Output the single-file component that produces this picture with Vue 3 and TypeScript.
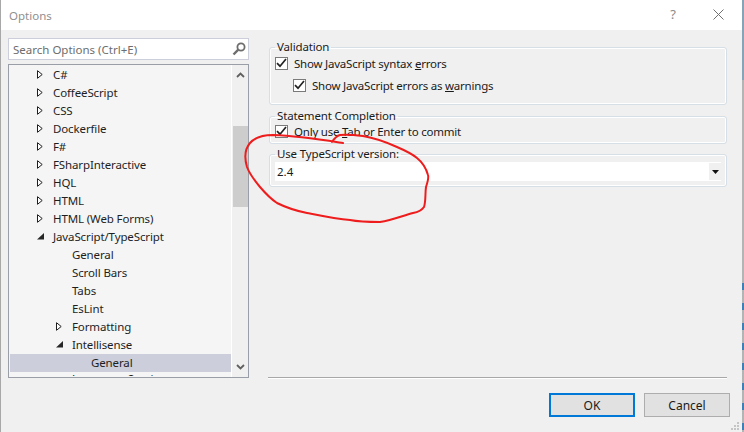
<script setup lang="ts">
interface Row { label: string; depth: number; arrow?: 'open' | 'closed'; selected?: boolean }
const rows: Row[] = [
  { label: 'C#', depth: 0, arrow: 'closed' },
  { label: 'CoffeeScript', depth: 0, arrow: 'closed' },
  { label: 'CSS', depth: 0, arrow: 'closed' },
  { label: 'Dockerfile', depth: 0, arrow: 'closed' },
  { label: 'F#', depth: 0, arrow: 'closed' },
  { label: 'FSharpInteractive', depth: 0, arrow: 'closed' },
  { label: 'HQL', depth: 0, arrow: 'closed' },
  { label: 'HTML', depth: 0, arrow: 'closed' },
  { label: 'HTML (Web Forms)', depth: 0, arrow: 'closed' },
  { label: 'JavaScript/TypeScript', depth: 0, arrow: 'open' },
  { label: 'General', depth: 1 },
  { label: 'Scroll Bars', depth: 1 },
  { label: 'Tabs', depth: 1 },
  { label: 'EsLint', depth: 1 },
  { label: 'Formatting', depth: 1, arrow: 'closed' },
  { label: 'Intellisense', depth: 1, arrow: 'open' },
  { label: 'General', depth: 2, selected: true },
  { label: 'Language Service', depth: 1 },
]
const indent = (d: number) => ({ paddingLeft: `${27 + d * 19}px` })
</script>

<template>
  <div class="window">
    <header class="titlebar">
      <span class="title">Options</span>
      <span class="help">?</span>
      <svg class="close" width="11" height="11" viewBox="0 0 11 11"><path d="M.5.5l10 10M10.5.5l-10 10" stroke="#707070" fill="none" /></svg>
    </header>
    <div class="body">
      <div class="main">
        <aside class="side">
          <div class="search">
            <span class="search-text">Search Options (Ctrl+E)</span>
            <svg width="14" height="14" viewBox="0 0 14 14"><circle cx="9" cy="5" r="3.6" fill="none" stroke="#6e6e6e" stroke-width="1.8" /><path d="M6.3 7.7L1.5 12.5" stroke="#6e6e6e" stroke-width="2.4" /></svg>
          </div>
          <div class="tree">
            <div class="rows">
              <div v-for="(r, i) in rows" :key="i" class="row" :class="{ selected: r.selected }" :style="indent(r.depth)">
                <span class="arrow">
                  <svg v-if="r.arrow === 'closed'" width="6" height="9" viewBox="0 0 6 9"><path d="M.5.7L5.2 4.5.5 8.3z" fill="#fff" stroke="#1e1e1e" /></svg>
                  <svg v-else-if="r.arrow === 'open'" width="7" height="7" viewBox="0 0 7 7"><path d="M7 0v6.5H0z" fill="#262626" /></svg>
                </span>
                <span class="label">{{ r.label }}</span>
              </div>
            </div>
            <div class="scrollbar">
              <svg class="chev" width="9" height="6" viewBox="0 0 9 6"><path d="M1 5l3.5-3.5L8 5" fill="none" stroke="#606060" stroke-width="1.8" /></svg>
              <div class="thumb"></div>
              <svg class="chev down" width="9" height="6" viewBox="0 0 9 6"><path d="M1 1l3.5 3.5L8 1" fill="none" stroke="#606060" stroke-width="1.8" /></svg>
            </div>
          </div>
        </aside>
        <section class="panel">
          <div class="groups">
            <fieldset class="group g1">
              <legend>Validation</legend>
              <label class="check first"><span class="box"><svg width="11" height="10" viewBox="0 0 11 10"><path d="M1 5.2l3 3L10 1" fill="none" stroke="#222" stroke-width="1.7" /></svg></span><span>Show JavaScript syntax <u>e</u>rrors</span></label>
              <label class="check sub"><span class="box"><svg width="11" height="10" viewBox="0 0 11 10"><path d="M1 5.2l3 3L10 1" fill="none" stroke="#222" stroke-width="1.7" /></svg></span><span>Show JavaScript errors as <u>w</u>arnings</span></label>
            </fieldset>
            <fieldset class="group g2">
              <legend>Statement Completion</legend>
              <label class="check second"><span class="box"><svg width="11" height="10" viewBox="0 0 11 10"><path d="M1 5.2l3 3L10 1" fill="none" stroke="#222" stroke-width="1.7" /></svg></span><span>Only use <u>T</u>ab or Enter to commit</span></label>
            </fieldset>
            <fieldset class="group g3">
              <legend>Use TypeScript version:</legend>
              <div class="select">
                <span>2.4</span>
                <span class="drop"><svg width="7" height="4" viewBox="0 0 7 4"><path d="M0 0h7L3.5 4z" fill="#111" /></svg></span>
              </div>
            </fieldset>
          </div>
          <div class="rule"></div>
        </section>
      </div>
      <footer class="footer">
        <button class="btn primary">OK</button>
        <button class="btn">Cancel</button>
      </footer>
    </div>
    <svg class="scribble" width="744" height="432" viewBox="0 0 744 432">
      <path d="M343 143C330 141 300 136 273 135C262 135 255 137 250 143C245 149 244 157 247 167C250 175 255 181 260 187C266 194 271 199 277 203C287 208 297 211 307 213C322 216 336 219 350 220C360 222 370 222 380 222C392 220 402 216 413 213C418 212 422 210 424 207C426 201 425 194 426 187C428 181 429 178 428 175C426 168 422 162 417 158C411 153 404 150 397 147C386 142 375 138 363 136C355 135 347 134 340 135C336 136 334 139 332 142" fill="none" stroke="#ee1c1c" stroke-width="2" stroke-linecap="round" />
    </svg>
    <svg class="grip" width="10" height="10" viewBox="0 0 10 10"><path d="M7 1h2v2H7zM4 4h2v2H4zM7 4h2v2H7zM1 7h2v2H1zM4 7h2v2H4zM7 7h2v2H7z" fill="#c4c4c4" /></svg>
    <div class="edge"></div>
  </div>
</template>

<style scoped>
.window {
  position: relative;
  width: 744px;
  height: 432px;
  box-sizing: border-box;
  border-left: 1px solid #a8a8a8;
  padding-right: 2px;
  background: #f0f0f0;
  overflow: hidden;
  font-family: "Noto Sans", "Open Sans", sans-serif;
  font-size: 11.5px;
  color: #1a1a1a;
  display: flex;
  flex-direction: column;
}
.edge {
  position: absolute;
  right: 0;
  top: 0;
  width: 2px;
  height: 432px;
  background:
    repeating-linear-gradient(to bottom, #3f7fb5 0 7px, #b4b4b4 7px 20px) 0 283px / 2px 149px no-repeat,
    linear-gradient(to bottom, #86a3b7 0 80px, #b4b4b4 80px);
}
.titlebar {
  height: 30px;
  flex: none;
  background: #fff;
  display: flex;
  align-items: center;
  padding-left: 8px;
}
.title { color: #8f8f8f; flex: 1; }
.help { color: #8a8a8a; font-size: 13px; margin: -2px 37px 0 0; }
.close { margin: -2px 18px 0 0; }
.body { flex: 1; display: flex; flex-direction: column; min-height: 0; }
.main { display: flex; padding: 8px 0 0 7px; flex: 1; min-height: 0; }
.side { width: 241px; flex: none; display: flex; flex-direction: column; gap: 4px; }
.search {
  height: 22px;
  box-sizing: border-box;
  background: #fff;
  border: 1px solid #cccedb;
  display: flex;
  align-items: center;
  justify-content: space-between;
  padding: 0 2px 0 4px;
  color: #6d6d6d;
}
.search-text { padding-top: 1px; }
.tree {
  height: 315px;
  box-sizing: border-box;
  border: 1px solid #9a9ea6;
  background: #f5f5f5;
  display: flex;
  overflow: hidden;
}
.rows { flex: 1; min-width: 0; padding: 1px 0 0 1px; height: 311px; box-sizing: border-box; overflow: hidden; }
.row { height: 18px; display: flex; align-items: center; white-space: nowrap; color: #1e1e1e; letter-spacing: -0.12px; }
.row:last-child { margin-top: -2px; }
.row.selected { background: #cccedb; position: relative; z-index: 1; }
.arrow { width: 16px; flex: none; display: flex; align-items: center; height: 18px; }
.scrollbar {
  width: 17px;
  flex: none;
  background: #f0f0f0;
  border-left: 1px solid #fff;
  box-sizing: border-box;
  display: flex;
  flex-direction: column;
  align-items: center;
}
.chev { margin-top: 7px; flex: none; }
.chev.down { margin-top: auto; margin-bottom: 7px; }
.thumb { width: 15px; height: 81px; background: #cdcdcd; margin-top: 48px; flex: none; }
.panel { flex: 1; display: flex; flex-direction: column; padding: 1px 0 0 20px; min-width: 0; }
.groups { display: flex; flex-direction: column; height: 329px; }
.group {
  margin: 0;
  width: 458px;
  box-sizing: border-box;
  border: 1px solid #d5dfe5;
  border-radius: 3px;
  box-shadow: inset 0 0 0 1px #fff;
  padding: 0 0 0 5px;
  min-inline-size: 0;
}
.group legend { padding: 0 2px; margin-left: 0; line-height: 16px; color: #1a1a1a; letter-spacing: -0.15px; }
.g1 { height: 66px; flex: none; }
.g2 { height: 36px; margin-top: 3px; flex: none; }
.g3 { height: 41px; margin-top: 2px; flex: none; }
.check { display: flex; align-items: center; height: 18px; white-space: nowrap; letter-spacing: -0.22px; }
.check.first { margin-top: -1px; }
.check.second { margin-top: -2px; }
.check.sub { margin: 4px 0 0 18px; }
.box {
  width: 13px;
  height: 13px;
  box-sizing: border-box;
  border: 1px solid #7a7a7a;
  background: #fff;
  display: flex;
  align-items: center;
  justify-content: center;
  margin-right: 6px;
  flex: none;
}
.select {
  width: 446px;
  height: 19px;
  background: #fff;
  display: flex;
  align-items: center;
  justify-content: space-between;
  padding-left: 2px;
  box-sizing: border-box;
}
.drop { width: 12px; height: 17px; background: #f0f0f0; display: flex; align-items: center; justify-content: center; }
.rule { width: 459px; margin-left: -1px; height: 1px; background: #a8a8a8; box-shadow: 0 1px 0 #fff; flex: none; margin-top: 9px; }
.footer { height: 54px; flex: none; display: flex; justify-content: flex-end; gap: 9px; padding: 15px 12px 0 0; box-sizing: border-box; }
.btn {
  width: 86px;
  height: 24px;
  box-sizing: border-box;
  border: 1px solid #adadad;
  background: #e1e1e1;
  font: inherit;
  font-size: 12px;
  color: #1a1a1a;
  padding: 0;
}
.btn.primary { border: 2px solid #0078d7; }
.scribble { position: absolute; left: -1px; top: 0; pointer-events: none; }
.grip { position: absolute; right: 4px; bottom: 1px; }
</style>
